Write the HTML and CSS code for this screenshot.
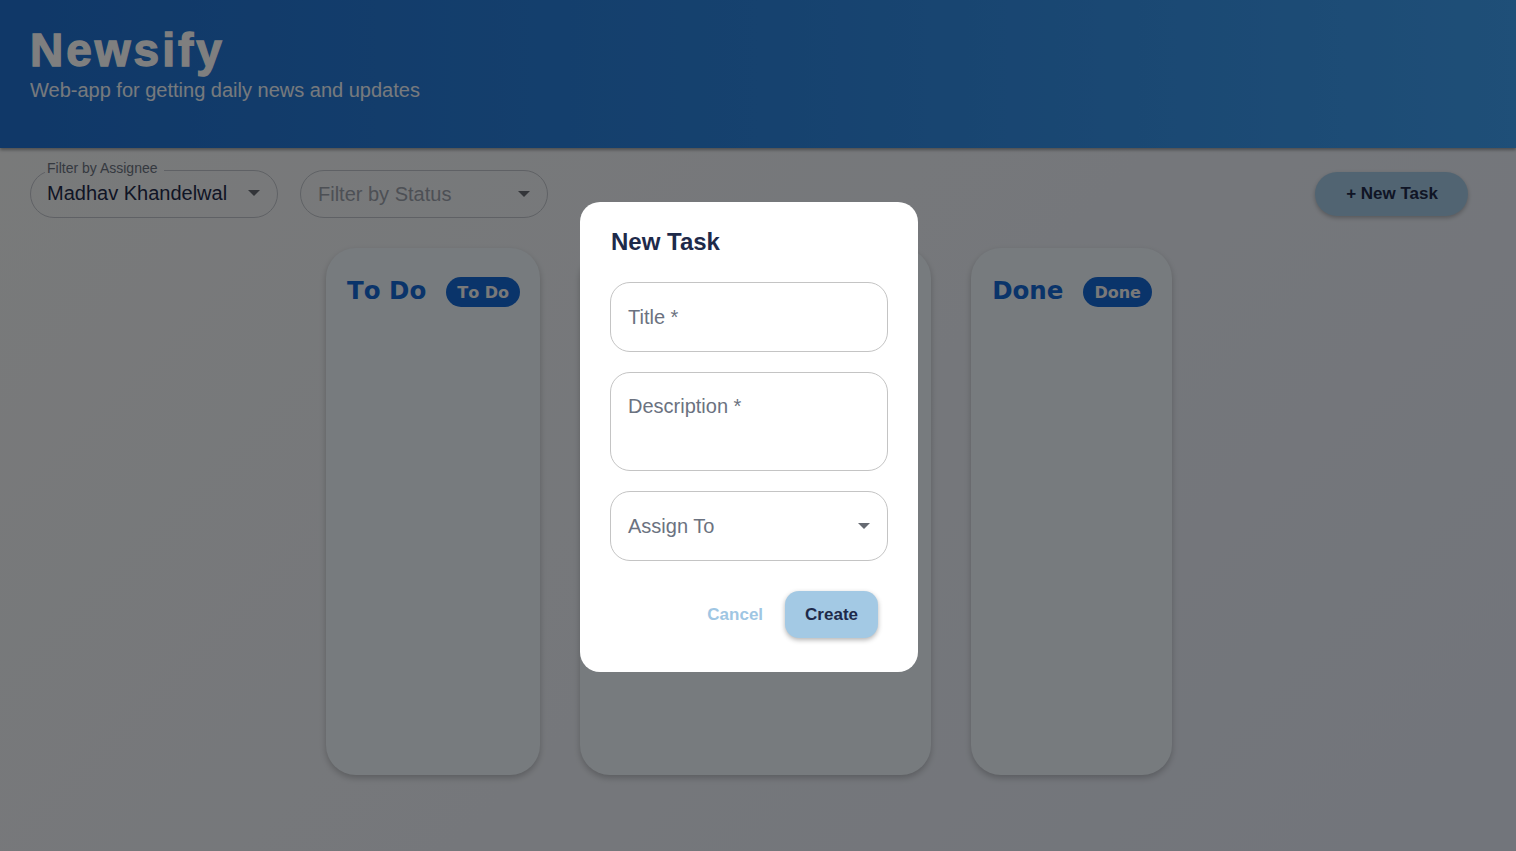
FILE: index.html
```html
<!DOCTYPE html>
<html lang="en">
<head>
<meta charset="utf-8">
<title>Newsify</title>
<link rel="stylesheet" href="styles.css">
</head>
<body>
<header class="app-header">
  <h1 class="brand">Newsify</h1>
  <p class="tagline">Web-app for getting daily news and updates</p>
</header>

<main class="board-page">
  <div class="toolbar">
    <fieldset class="select select-labeled">
      <legend class="select-label">Filter by Assignee</legend>
      <div class="select-body">
        <span class="select-value">Madhav Khandelwal</span>
        <span class="caret"></span>
      </div>
    </fieldset>
    <div class="select select-plain">
      <span class="select-placeholder">Filter by Status</span>
      <span class="caret"></span>
    </div>
    <button class="btn-new">+ New Task</button>
  </div>

  <section class="board">
    <div class="column">
      <div class="column-head">
        <h2 class="column-title">To Do</h2>
        <span class="badge">To Do</span>
      </div>
    </div>
    <div class="column column-wide">
      <div class="column-head">
        <h2 class="column-title">In Progress</h2>
        <span class="badge">In Progress</span>
      </div>
    </div>
    <div class="column">
      <div class="column-head">
        <h2 class="column-title">Done</h2>
        <span class="badge">Done</span>
      </div>
    </div>
  </section>
</main>

<div class="overlay">
  <div class="modal">
    <h3 class="modal-title">New Task</h3>
    <div class="field field-input"><span class="field-label">Title *</span></div>
    <div class="field field-textarea"><span class="field-label">Description *</span></div>
    <div class="field field-select"><span class="field-label">Assign To</span><span class="caret caret-field"></span></div>
    <div class="modal-actions">
      <button class="btn-cancel">Cancel</button>
      <button class="btn-create">Create</button>
    </div>
  </div>
</div>
</body>
</html>
```

FILE: styles.css
```css
* { box-sizing: border-box; }

html, body {
  margin: 0;
  height: 100%;
}

body {
  font-family: "Liberation Sans", Arial, sans-serif;
  background: linear-gradient(135deg, #f3f5f5 0%, #ebeff6 55%, #e4eaf6 100%);
  min-height: 851px;
}

.app-header {
  height: 148px;
  padding: 24px 30px 0;
  background: linear-gradient(90deg, #2070d0 0%, #2c84de 50%, #3e9ef0 100%);
  box-shadow: 0 2px 3px rgba(0, 0, 0, 0.35);
  position: relative;
}

.brand {
  margin: 0;
  font-size: 46px;
  line-height: 53px;
  font-weight: 700;
  letter-spacing: 3px;
  color: #ffffff;
  -webkit-text-stroke: 1.3px #ffffff;
}

.tagline {
  margin: 2px 0 0;
  font-size: 20px;
  line-height: 23px;
  color: #ffffff;
  opacity: 0.92;
}

.board-page {
  padding: 12px 48px 0 30px;
}

.toolbar {
  display: flex;
  align-items: flex-end;
  gap: 22px;
  height: 58px;
}

.select {
  width: 248px;
  border: 1px solid #bfc3ca;
  border-radius: 24px;
  margin: 0;
}

.select-labeled {
  padding: 0 16px 0 14px;
  min-width: 0;
}

.select-label {
  padding: 0 6px 4px 2px;
  font-size: 14px;
  line-height: 16px;
  color: #6b7280;
}

.select-body {
  height: 37px;
  padding-bottom: 11px;
  padding-left: 2px;
  display: flex;
  align-items: center;
  justify-content: space-between;
}

.select-value {
  font-size: 20px;
  color: #1e2a4a;
}

.select-plain {
  height: 48px;
  padding: 0 16px 0 17px;
  display: flex;
  align-items: center;
  justify-content: space-between;
}

.select-placeholder {
  font-size: 20px;
  color: #9aa0ab;
}

.caret {
  width: 0;
  height: 0;
  border-left: 6px solid transparent;
  border-right: 6px solid transparent;
  border-top: 6px solid #666a72;
  margin-right: 1px;
}

.btn-new {
  margin-left: auto;
  margin-bottom: 2px;
  height: 44px;
  padding: 0 30px 0 31px;
  border: none;
  border-radius: 22px;
  background: #a3c9e4;
  color: #1e2a4a;
  font-family: "Liberation Sans", Arial, sans-serif;
  font-size: 17px;
  font-weight: 700;
  box-shadow: 0 2px 4px rgba(0, 0, 0, 0.25);
}

.board {
  display: flex;
  justify-content: center;
  gap: 40px;
  margin-top: 30px;
}

.column {
  height: 527px;
  padding: 29px 20px 20px 21px;
  background: #eef6fc;
  border-radius: 30px;
  box-shadow: 0 3px 6px rgba(0, 0, 0, 0.22);
}

.column-wide {
  padding-right: 28px;
}

.column-head {
  display: flex;
  align-items: center;
  gap: 20px;
  height: 30px;
}

.column-title {
  margin: 0;
  padding-bottom: 4px;
  font-family: "DejaVu Sans", Verdana, sans-serif;
  font-size: 24.5px;
  font-weight: 700;
  font-kerning: none;
  color: #1468d4;
  white-space: nowrap;
}

.badge {
  height: 30px;
  padding: 0 11px;
  display: inline-flex;
  align-items: center;
  border-radius: 15px;
  background: #1468d4;
  color: #f2f2f2;
  font-family: "DejaVu Sans", Verdana, sans-serif;
  font-size: 16px;
  font-weight: 700;
  font-kerning: none;
  white-space: nowrap;
}

.overlay {
  position: fixed;
  inset: 0;
  background: rgba(0, 0, 0, 0.5);
  display: flex;
  align-items: center;
  justify-content: center;
  padding-right: 18px;
  padding-top: 23px;
}

.modal {
  width: 338px;
  height: 470px;
  padding: 26px 30px 34px 30px;
  background: #ffffff;
  border-radius: 20px;
  display: flex;
  flex-direction: column;
}

.modal-title {
  margin: 0 0 26px 1px;
  font-size: 24px;
  line-height: 28px;
  font-weight: 700;
  color: #1e2a4a;
}

.field {
  border: 1px solid #c4c4c4;
  border-radius: 20px;
  padding: 0 17px;
  display: flex;
  align-items: center;
  justify-content: space-between;
}

.field + .field { margin-top: 20px; }

.field-input,
.field-select { height: 70px; }

.field-textarea {
  height: 99px;
  align-items: flex-start;
  padding-top: 21px;
}

.field-label {
  font-size: 20px;
  line-height: 24px;
  color: #6b7280;
}

.caret-field {
  margin-right: 0;
  border-top-color: #666a72;
}

.modal-actions {
  margin-top: 30px;
  display: flex;
  justify-content: flex-end;
  align-items: center;
  gap: 22px;
  padding-right: 10px;
}

.btn-cancel {
  padding: 0;
  border: none;
  background: none;
  color: #9fc6e3;
  font-family: "Liberation Sans", Arial, sans-serif;
  font-size: 17px;
  font-weight: 700;
}

.btn-create {
  height: 47px;
  padding: 0 20px;
  border: none;
  border-radius: 14px;
  background: #a3c9e4;
  color: #1e2a4a;
  font-family: "Liberation Sans", Arial, sans-serif;
  font-size: 17px;
  font-weight: 700;
  box-shadow: 0 2px 5px rgba(0, 0, 0, 0.3);
}
```
